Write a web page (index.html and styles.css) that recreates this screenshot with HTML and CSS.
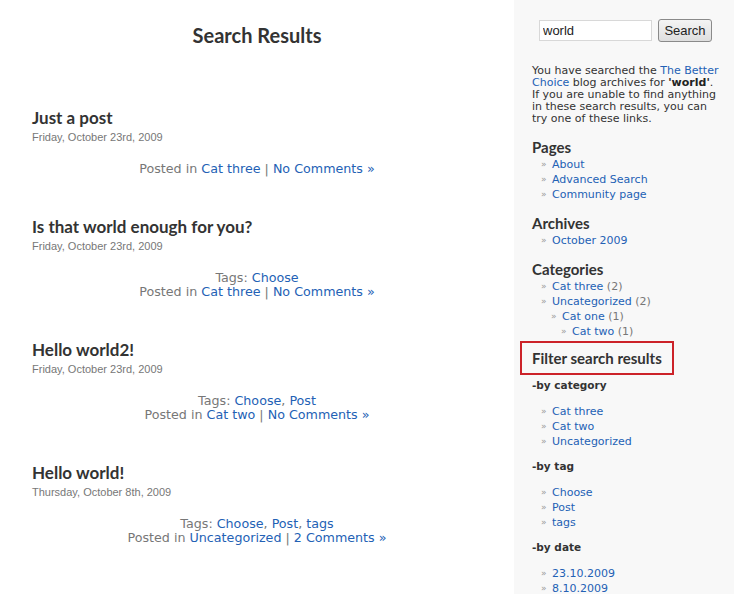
FILE: index.html
```html
<!DOCTYPE html>
<html>
<head>
<meta charset="utf-8">
<link rel="stylesheet" href="styles.css">
</head>
<body>
<div class="page">
  <main class="main">
    <h1 class="page-title">Search Results</h1>

    <article class="post">
      <h2 class="post-title">Just a post</h2>
      <div class="post-date">Friday, October 23rd, 2009</div>
      <div class="post-meta">
        <div>Posted in <a href="#">Cat three</a> | <a href="#">No Comments »</a></div>
      </div>
    </article>

    <article class="post">
      <h2 class="post-title">Is that world enough for you?</h2>
      <div class="post-date">Friday, October 23rd, 2009</div>
      <div class="post-meta">
        <div>Tags: <a href="#">Choose</a></div>
        <div>Posted in <a href="#">Cat three</a> | <a href="#">No Comments »</a></div>
      </div>
    </article>

    <article class="post">
      <h2 class="post-title">Hello world2!</h2>
      <div class="post-date">Friday, October 23rd, 2009</div>
      <div class="post-meta">
        <div>Tags: <a href="#">Choose</a>, <a href="#">Post</a></div>
        <div>Posted in <a href="#">Cat two</a> | <a href="#">No Comments »</a></div>
      </div>
    </article>

    <article class="post">
      <h2 class="post-title">Hello world!</h2>
      <div class="post-date">Thursday, October 8th, 2009</div>
      <div class="post-meta">
        <div>Tags: <a href="#">Choose</a>, <a href="#">Post</a>, <a href="#">tags</a></div>
        <div>Posted in <a href="#">Uncategorized</a> | <a href="#">2 Comments »</a></div>
      </div>
    </article>
  </main>

  <aside class="sidebar">
    <form class="search-form">
      <input class="search-input" type="text" value="world">
      <button class="search-button" type="button">Search</button>
    </form>

    <p class="intro">You have searched the <a href="#">The Better Choice</a> blog archives for <strong>'world'</strong>. If you are unable to find anything in these search results, you can try one of these links.</p>

    <h3 class="widget-title">Pages</h3>
    <ul class="links">
      <li><a href="#">About</a></li>
      <li><a href="#">Advanced Search</a></li>
      <li><a href="#">Community page</a></li>
    </ul>

    <h3 class="widget-title">Archives</h3>
    <ul class="links">
      <li><a href="#">October 2009</a></li>
    </ul>

    <h3 class="widget-title">Categories</h3>
    <ul class="links">
      <li><a href="#">Cat three</a> <span class="count">(2)</span></li>
      <li><a href="#">Uncategorized</a> <span class="count">(2)</span>
        <ul class="links sub">
          <li><a href="#">Cat one</a> <span class="count">(1)</span>
            <ul class="links sub">
              <li><a href="#">Cat two</a> <span class="count">(1)</span></li>
            </ul>
          </li>
        </ul>
      </li>
    </ul>

    <h3 class="widget-title filter-title">Filter search results</h3>

    <h4 class="filter-sub">-by category</h4>
    <ul class="links">
      <li><a href="#">Cat three</a></li>
      <li><a href="#">Cat two</a></li>
      <li><a href="#">Uncategorized</a></li>
    </ul>

    <h4 class="filter-sub">-by tag</h4>
    <ul class="links">
      <li><a href="#">Choose</a></li>
      <li><a href="#">Post</a></li>
      <li><a href="#">tags</a></li>
    </ul>

    <h4 class="filter-sub">-by date</h4>
    <ul class="links">
      <li><a href="#">23.10.2009</a></li>
      <li><a href="#">8.10.2009</a></li>
    </ul>
  </aside>
</div>
</body>
</html>
```

FILE: styles.css
```css
html, body {
  margin: 0;
  padding: 0;
  background: #ffffff;
}

body {
  color: #333333;
  font-family: "DejaVu Sans", Verdana, sans-serif;
}

a {
  color: #2361b5;
  text-decoration: none;
}

.page {
  display: flex;
  min-height: 594px;
}

.main {
  width: 514px;
  flex: none;
  background: #ffffff;
}

.page-title {
  margin: 23px 0 0;
  font-family: Lato, "DejaVu Sans", sans-serif;
  font-weight: bold;
  font-size: 20px;
  line-height: 24px;
  text-align: center;
  color: #333333;
}

.post {
  padding: 0 32px;
  margin-top: 61px;
}

.post + .post {
  margin-top: 41px;
}

.post-title {
  margin: 0;
  font-family: Lato, "DejaVu Sans", sans-serif;
  font-weight: bold;
  font-size: 17px;
  line-height: 20px;
  color: #333333;
}

.post-date {
  margin-top: 2px;
  font-family: "Liberation Sans", Arial, sans-serif;
  font-size: 11px;
  line-height: 14px;
  color: #777777;
}

.post-meta {
  margin-top: 18px;
  text-align: center;
  font-family: "DejaVu Sans", Verdana, sans-serif;
  font-size: 12.7px;
  line-height: 14px;
  color: #777777;
}

.sidebar {
  flex: 1;
  background: #f8f8f8;
  padding: 0 10px 0 18px;
}

.search-form {
  display: flex;
  align-items: center;
  gap: 6px;
  margin: 19px 0 0 7px;
}

.search-input {
  box-sizing: border-box;
  width: 113px;
  height: 21px;
  margin: 0;
  padding: 0 3px;
  border: 1px solid #d8d8d8;
  background: #ffffff;
  font-family: "Liberation Sans", Arial, sans-serif;
  font-size: 13px;
  color: #222222;
}

.search-button {
  box-sizing: border-box;
  width: 54px;
  height: 23px;
  margin: 0;
  padding: 0;
  border: 1px solid #8a8a8a;
  border-radius: 3px;
  background: linear-gradient(#f4f4f4, #dedede);
  font-family: "Liberation Sans", Arial, sans-serif;
  font-size: 13px;
  color: #222222;
}

.intro {
  margin: 23px 0 0;
  max-width: 189px;
  font-size: 11px;
  line-height: 12px;
  color: #333333;
}

.intro strong {
  color: #222222;
}

.widget-title {
  margin: 13px 0 0;
  font-family: Lato, "DejaVu Sans", sans-serif;
  font-weight: bold;
  font-size: 15px;
  line-height: 18px;
  color: #333333;
}

.links {
  list-style: none;
  margin: 1px 0 0;
  padding: 0 0 0 9px;
  font-size: 11px;
  line-height: 15px;
}

.links li {
  line-height: 15px;
}

.links + .widget-title {
  margin-top: 12px;
}

.links li::before {
  content: "»";
  display: inline-block;
  width: 11px;
  color: #999999;
  font-size: 9px;
  line-height: 10px;
  vertical-align: 1px;
}

.links .sub {
  margin: 0;
  padding-left: 10px;
}

.count {
  color: #777777;
}

.links + .filter-title {
  width: fit-content;
  margin: 2px 0 0 -12px;
  padding: 6px 10px;
  border: 2px solid #cc2229;
}

.filter-sub {
  margin: 3px 0 0;
  font-size: 10.5px;
  line-height: 14px;
  font-weight: bold;
  color: #333333;
}

.filter-sub + .links {
  margin-top: 12px;
}

.links + .filter-sub {
  margin-top: 10px;
}
```
